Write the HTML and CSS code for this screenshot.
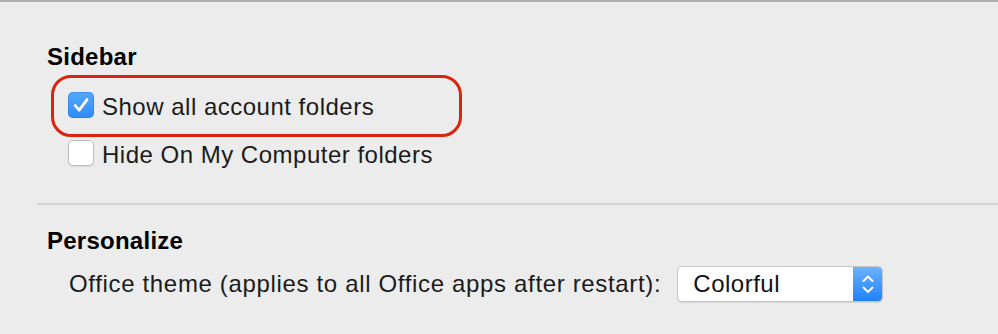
FILE: index.html
```html
<!DOCTYPE html>
<html>
<head>
<meta charset="utf-8">
<link rel="stylesheet" href="styles.css">
</head>
<body>
<div class="window">
  <section class="group">
    <h2 class="group-title">Sidebar</h2>
    <div class="options">
      <label class="opt highlighted">
        <span class="annot"></span>
        <span class="cb cb-on">
          <svg viewBox="0 0 26 26" width="26" height="26"><path d="M7.2 13.6 L11.2 18.2 L19 7.6" fill="none" stroke="#fff" stroke-width="2.8" stroke-linecap="round" stroke-linejoin="round"/></svg>
        </span>
        <span class="opt-text">Show all account folders</span>
      </label>
      <label class="opt">
        <span class="cb"></span>
        <span class="opt-text">Hide On My Computer folders</span>
      </label>
    </div>
  </section>
  <div class="divider"></div>
  <section class="group group-2">
    <h2 class="group-title">Personalize</h2>
    <div class="theme-row">
      <span class="opt-text theme-label">Office theme (applies to all Office apps after restart):</span>
      <div class="popup">
        <span class="popup-value">Colorful</span>
        <span class="popup-arrows">
          <svg viewBox="0 0 30 36" width="30" height="36"><path d="M10.5 15 L15 10.5 L19.5 15 M10.5 21.5 L15 26 L19.5 21.5" fill="none" stroke="#fff" stroke-width="2" stroke-linecap="round" stroke-linejoin="round"/></svg>
        </span>
      </div>
    </div>
  </section>
</div>
</body>
</html>
```
FILE: styles.css
```css
html, body {
  margin: 0;
  padding: 0;
  background: #ececec;
}
body {
  font-family: "Liberation Sans", Arial, sans-serif;
  color: #1b1b1b;
  width: 998px;
  height: 334px;
  overflow: hidden;
}
.window {
  border-top: 2px solid #adadad;
  background: #ececec;
  height: 332px;
}
.group {
  padding: 41px 0 0 47px;
}
.group-2 {
  padding-top: 22px;
}
.group-title {
  margin: 0;
  font-size: 24px;
  line-height: 28px;
  font-weight: bold;
  letter-spacing: 0.25px;
  color: #000;
}
.options {
  margin: 22px 0 0 21px;
  display: flex;
  flex-direction: column;
  gap: 20px;
}
.opt {
  position: relative;
  display: flex;
  align-items: flex-start;
  gap: 8px;
  height: 28px;
}
.opt-text {
  font-size: 24px;
  line-height: 28px;
  letter-spacing: 0.5px;
  white-space: nowrap;
}
.theme-label {
  letter-spacing: 0.66px;
}
.cb {
  box-sizing: border-box;
  width: 26px;
  height: 26px;
  margin-top: -1px;
  border-radius: 5px;
  background: #fff;
  border: 1px solid #bdbdbd;
  box-shadow: 0 1px 1px rgba(0,0,0,0.08);
  display: flex;
  flex: none;
}
.cb-on {
  border: none;
  background: linear-gradient(#55a7fb, #2e8cf7);
  box-shadow: inset 0 0 0 1px rgba(30,110,220,0.35);
}
.annot {
  position: absolute;
  box-sizing: border-box;
  left: -17px;
  top: -18px;
  width: 411px;
  height: 62px;
  border: 3px solid #d9250f;
  border-radius: 20px;
  pointer-events: none;
}
.divider {
  margin: 34px 0 0 37px;
  height: 2px;
  background: #d4d4d4;
}
.theme-row {
  margin: 11px 0 0 22px;
  display: flex;
  align-items: center;
  gap: 16px;
}
.popup {
  box-sizing: border-box;
  width: 206px;
  height: 36px;
  display: flex;
  background: #fff;
  border: 1px solid #c6c6c6;
  border-radius: 5px;
  box-shadow: 0 1px 1px rgba(0,0,0,0.1);
  overflow: hidden;
}
.popup-value {
  flex: 1;
  padding-left: 15px;
  font-size: 24px;
  line-height: 34px;
  letter-spacing: 0.5px;
  color: #111;
}
.popup-arrows {
  width: 30px;
  flex: none;
  display: flex;
  align-items: center;
  justify-content: center;
  background: linear-gradient(#6db4fb, #1c80fa);
  margin: -1px -1px -1px 0;
  height: 36px;
}
```
